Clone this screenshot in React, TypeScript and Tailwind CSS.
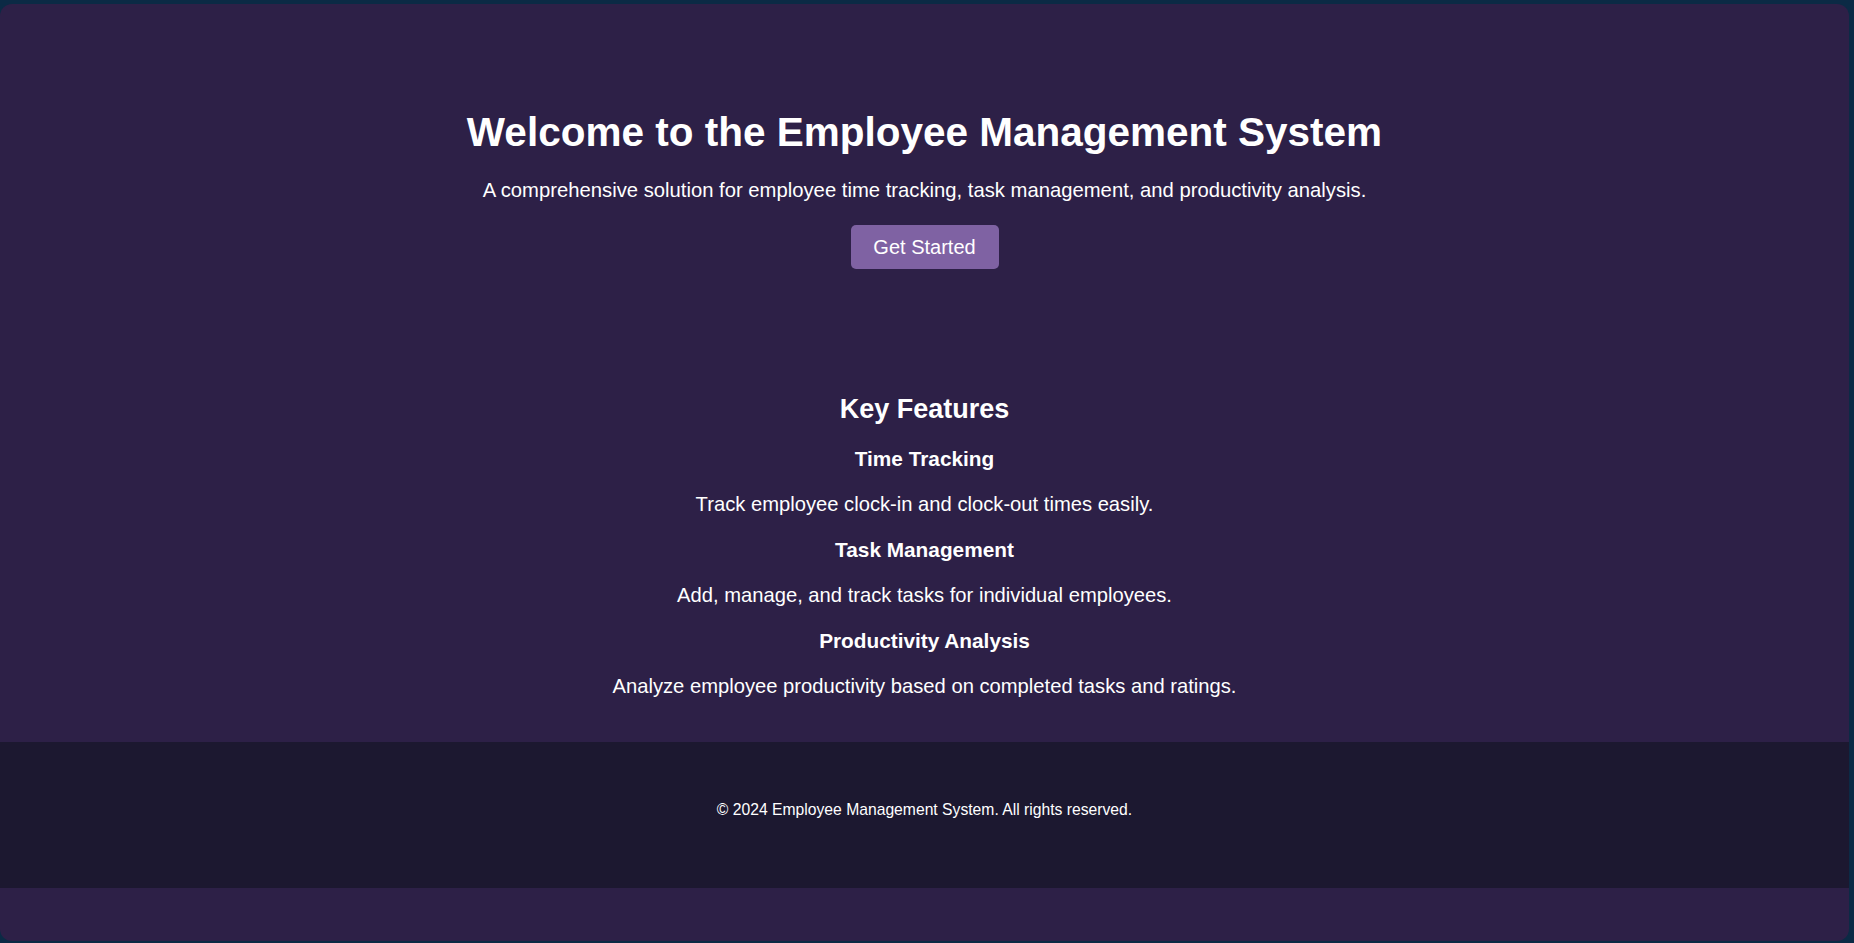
const features = [
  {
    title: "Time Tracking",
    text: "Track employee clock-in and clock-out times easily.",
  },
  {
    title: "Task Management",
    text: "Add, manage, and track tasks for individual employees.",
  },
  {
    title: "Productivity Analysis",
    text: "Analyze employee productivity based on completed tasks and ratings.",
  },
];

export default function App() {
  return (
    <div
      className="h-screen w-full bg-[#0b2a45] pt-[4px] pr-[5px] pb-[2px] text-white"
      style={{ fontFamily: '"Liberation Sans", Arial, sans-serif' }}
    >
      <div className="flex h-full flex-col overflow-hidden rounded-[12px] bg-[#2d2047]">
        {/* Hero */}
        <section className="flex flex-col items-center pt-[105px] text-center">
          <h1 className="text-[40.5px] font-bold leading-[46px]">
            Welcome to the Employee Management System
          </h1>
          <p className="mt-[24px] text-[20.25px] leading-[23px]">
            A comprehensive solution for employee time tracking, task management, and productivity analysis.
          </p>
          <button className="mt-[23px] h-[44px] w-[148px] rounded-[5px] bg-[#7f62a3] text-[20px] leading-[23px] text-white">
            Get Started
          </button>
        </section>

        {/* Features */}
        <section className="mt-[124px] flex flex-col items-center text-center">
          <h2 className="text-[27px] font-bold leading-[32px]">Key Features</h2>
          <div className="mt-[22px] flex flex-col items-center gap-[22.5px]">
            {features.map((f) => (
              <div key={f.title} className="flex flex-col items-center gap-[22.5px]">
                <h3 className="text-[20.8px] font-bold leading-[23px]">{f.title}</h3>
                <p className="text-[20.2px] leading-[23px]">{f.text}</p>
              </div>
            ))}
          </div>
        </section>

        <footer className="mt-[44px] bg-[#1c1830] pt-[59px] pb-[69px] text-center">
          <p className="text-[15.7px] leading-[18px]">
            © 2024 Employee Management System. All rights reserved.
          </p>
        </footer>

        <div className="flex-1" />
      </div>
    </div>
  );
}
